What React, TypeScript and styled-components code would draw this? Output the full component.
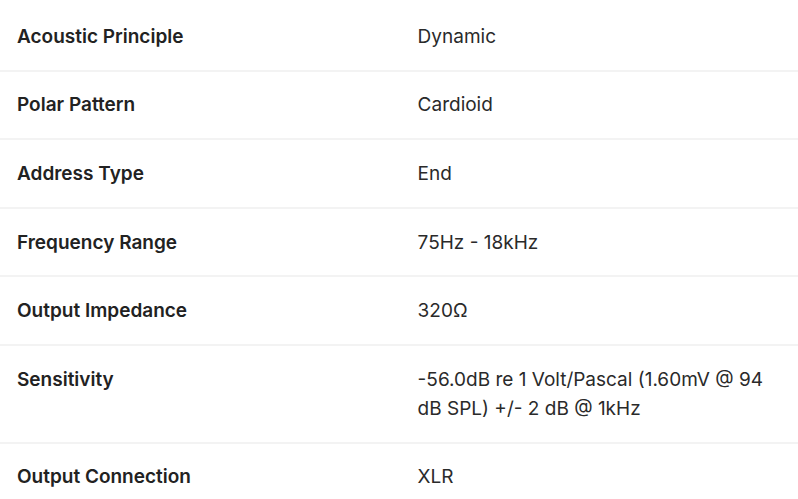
import React from 'react'
import styled, { createGlobalStyle } from 'styled-components'

const GlobalStyle = createGlobalStyle`
  html, body {
    margin: 0;
    padding: 0;
    background: #ffffff;
  }
  body {
    font-family: Inter, 'Noto Sans', sans-serif;
    color: #222222;
  }
`

const SpecTable = styled.table`
  width: 100%;
  margin-top: 3px;
  border-collapse: collapse;
  table-layout: fixed;
  font-size: 19px;
  line-height: 29px;
`

const Row = styled.tr`
  border-bottom: 2px solid #f3f3f3;
`

const Cell = styled.td<{ $label?: boolean }>`
  width: 50%;
  padding: 18.8px 17px 18.8px ${props => (props.$label ? '17px' : '20px')};
  vertical-align: top;
  font-weight: ${props => (props.$label ? 600 : 400)};
  color: ${props => (props.$label ? '#222222' : '#2a2a2a')};
`

const specs: [string, string][] = [
  ['Acoustic Principle', 'Dynamic'],
  ['Polar Pattern', 'Cardioid'],
  ['Address Type', 'End'],
  ['Frequency Range', '75Hz - 18kHz'],
  ['Output Impedance', '320Ω'],
  ['Sensitivity', '-56.0dB re 1 Volt/Pascal (1.60mV @ 94 dB SPL) +/- 2 dB @ 1kHz'],
  ['Output Connection', 'XLR'],
]

const App = () => {
  return (
    <>
      <GlobalStyle />
      <SpecTable>
        <tbody>
          {specs.map(([label, value]) => (
            <Row key={label}>
              <Cell $label>{label}</Cell>
              <Cell>{value}</Cell>
            </Row>
          ))}
        </tbody>
      </SpecTable>
    </>
  )
}

export default App
